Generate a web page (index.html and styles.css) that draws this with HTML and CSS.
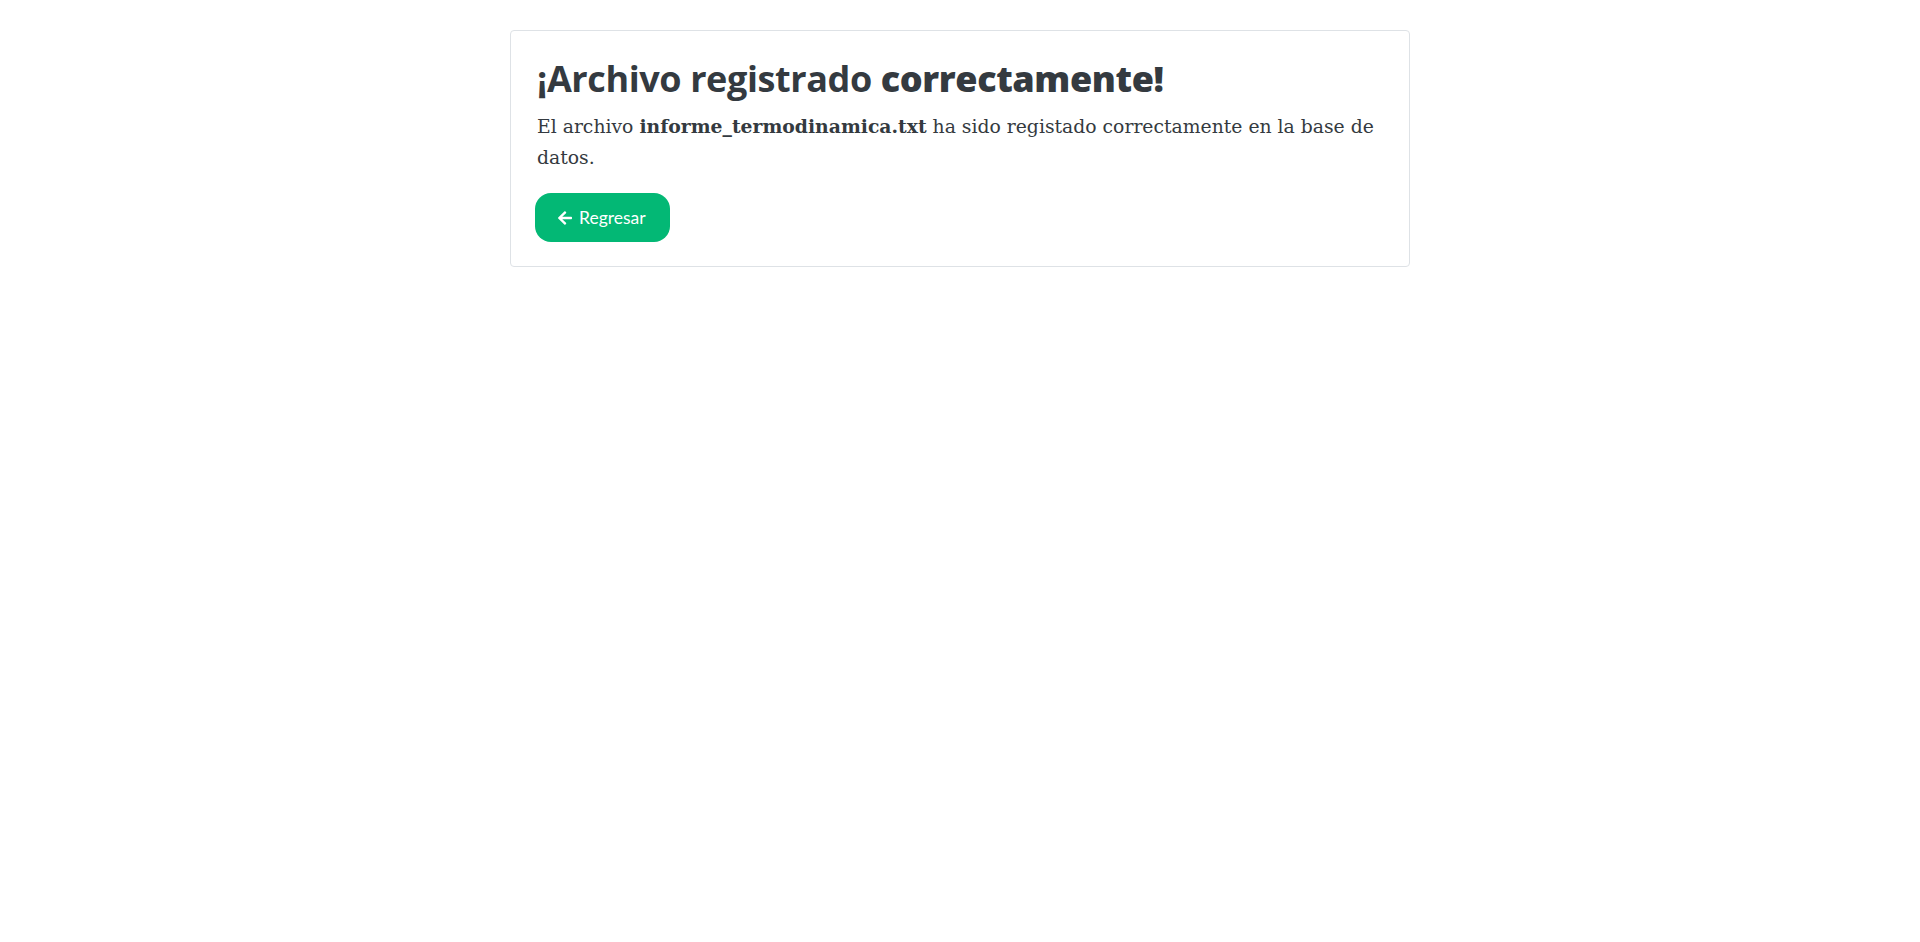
FILE: index.html
```html
<!DOCTYPE html>
<html lang="es">
<head>
<meta charset="utf-8">
<title>Archivo registrado</title>
<link rel="stylesheet" href="styles.css">
</head>
<body>
<main class="page">
  <section class="card">
    <h2 class="title">¡Archivo registrado <strong>correctamente!</strong></h2>
    <p class="lead">El archivo <strong>informe_termodinamica.txt</strong> ha sido registado correctamente en la base de datos.</p>
    <a class="btn-back" href="#">
      <svg class="icon" viewBox="0 0 448 512" aria-hidden="true"><path fill="currentColor" d="M257.5 445.1l-22.2 22.2c-9.4 9.4-24.6 9.4-33.9 0L7 273c-9.4-9.4-9.4-24.6 0-33.9L201.4 44.7c9.4-9.4 24.6-9.4 33.9 0l22.2 22.2c9.5 9.5 9.3 25-.4 34.3L136.6 216H424c13.3 0 24 10.7 24 24v32c0 13.3-10.7 24-24 24H136.6l120.5 114.8c9.8 9.3 10 24.8.4 34.3z"/></svg>
      <span>Regresar</span>
    </a>
  </section>
</main>
</body>
</html>
```

FILE: styles.css
```css
html, body {
  margin: 0;
  padding: 0;
  background: #ffffff;
}

body {
  font-family: "Open Sans", "Noto Sans", sans-serif;
  color: #343a40;
}

.page {
  padding-top: 30px;
  display: flex;
  justify-content: center;
}

.card {
  box-sizing: border-box;
  width: 900px;
  border: 1px solid #dee2e6;
  border-radius: 4px;
  padding: 26px 24px 24px 26px;
}

.title {
  margin: 0 0 11px 0;
  font-family: "Open Sans", "Noto Sans", sans-serif;
  font-size: 36px;
  font-weight: 700;
  line-height: 1.2;
  color: #343a40;
  letter-spacing: -0.4px;
}

.title strong {
  font-weight: 800;
}

.lead {
  margin: 0 0 20px 0;
  font-family: "DejaVu Serif", Georgia, serif;
  font-size: 18.8px;
  line-height: 31px;
  color: #343a40;
}

.lead strong {
  font-weight: 700;
}

.btn-back {
  display: inline-flex;
  align-items: center;
  gap: 6px;
  height: 49px;
  box-sizing: border-box;
  padding: 0 24px 0 22px;
  margin-left: -2px;
  border-radius: 16px;
  background: #03b875;
  color: #ffffff;
  text-decoration: none;
  font-family: Lato, "Open Sans", sans-serif;
  font-size: 17.5px;
}

.btn-back .icon {
  width: 16px;
  height: 16px;
}
```
